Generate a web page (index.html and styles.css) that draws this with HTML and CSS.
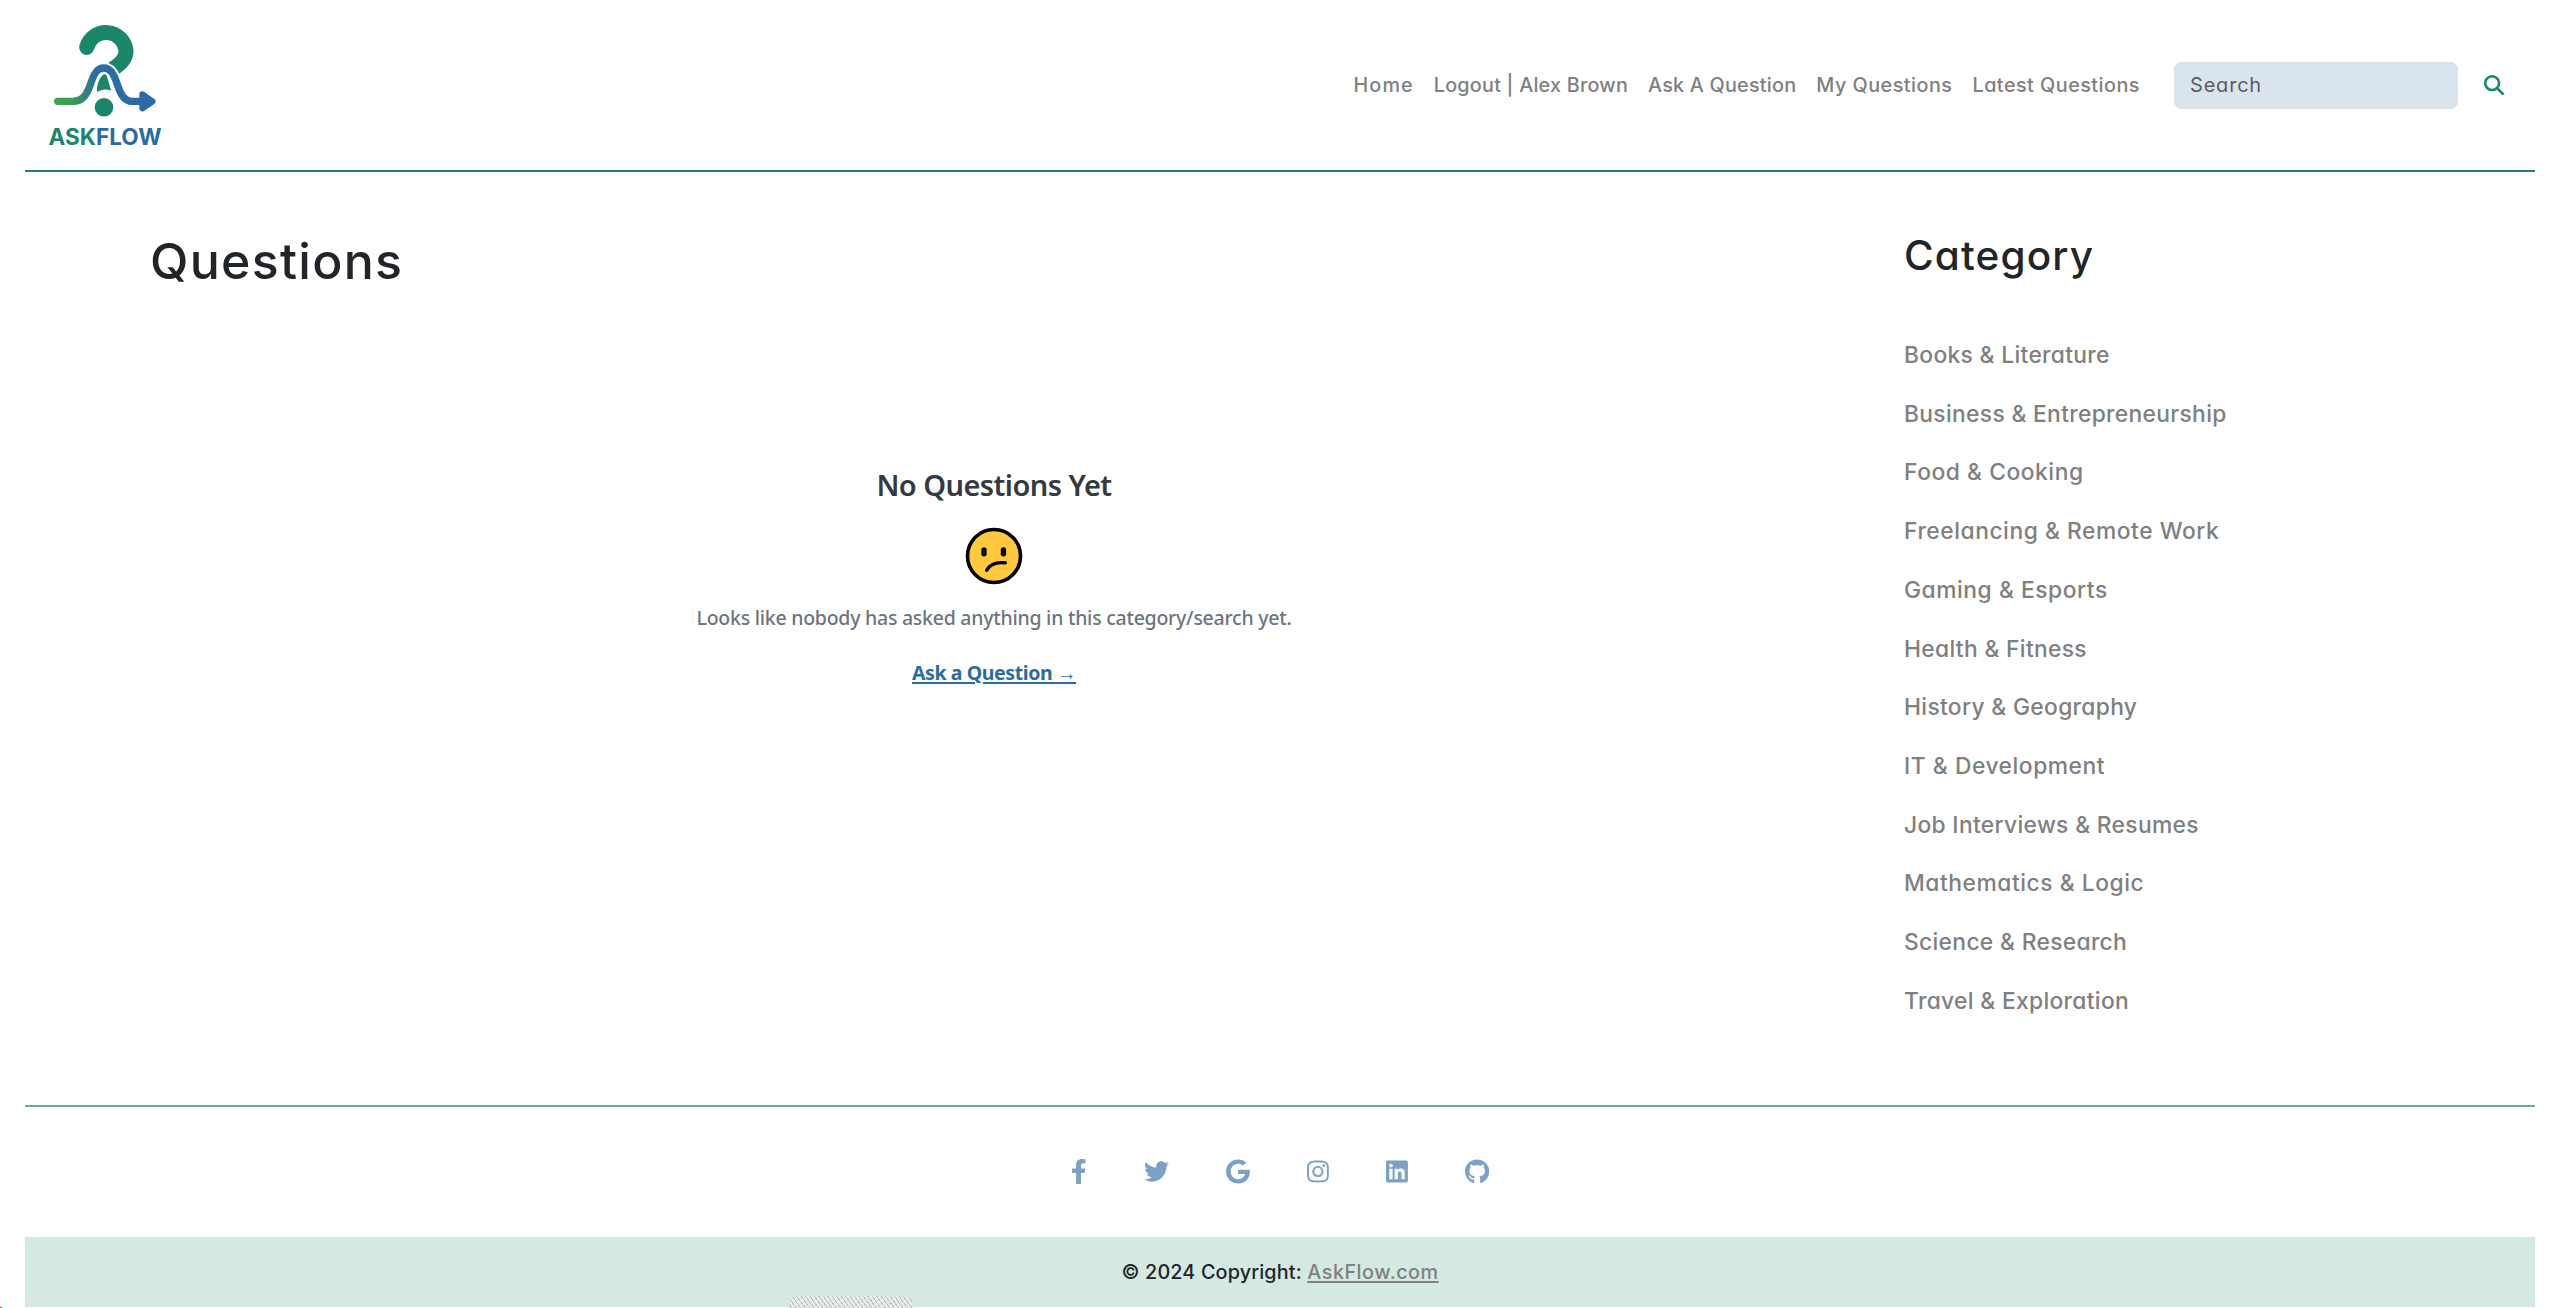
FILE: index.html
```html
<!DOCTYPE html>
<html lang="en">
<head>
<meta charset="utf-8">
<title>AskFlow</title>
<link rel="stylesheet" href="styles.css">
</head>
<body>
<div class="page">
  <header class="header">
    <a class="logo" href="#" aria-label="AskFlow">
      <svg width="130" height="140" viewBox="40 15 130 140">
        <defs>
          <linearGradient id="flow" gradientUnits="userSpaceOnUse" x1="54" y1="0" x2="156" y2="0">
            <stop offset="0" stop-color="#3fa648"/><stop offset=".18" stop-color="#3a9c50"/><stop offset=".42" stop-color="#2b6ca3"/><stop offset="1" stop-color="#2a6ba3"/>
          </linearGradient>
        </defs>
        <g fill="none" stroke="#1b876a" stroke-width="15">
          <path d="M86.700 47.500A20 20 0 0 1 126 51C126 58.500 121 64 112.500 69"/>
          <path d="M86.700 47.500h.01" stroke-linecap="round"/>
        </g>
        <path d="M104 68C110 68.500 113.500 72 117.300 84C121 96 125 101.300 132 101.300" fill="none" stroke="#fff" stroke-width="11"/>
        <path d="M107 76.500L111.200 90.800Q104 87.500 97 92C96.800 84 99.500 77 104 74.300Q105.800 73.500 107 76.500Z" fill="#1b876a"/>
        <circle cx="104" cy="107.300" r="9.300" fill="#1b876a"/>
        <path d="M57.600 101.300H73C82 101.300 86.500 96 90.500 84C94.500 72 98 68 103.700 68C109.400 68 113.200 72 117.200 84C121 96 125 101.300 132 101.300H148" fill="none" stroke="url(#flow)" stroke-width="7.300" stroke-linecap="round"/>
        <path d="M142.300 94.200L152.600 101.400L142.300 108.400Z" fill="#2a6ba3" stroke="#2a6ba3" stroke-width="6" stroke-linejoin="round"/>
        <text class="logo-text" x="48.500" y="145" textLength="113"><tspan fill="#1b876a">ASK</tspan><tspan fill="#2a6ba3">FLOW</tspan></text>
      </svg>
    </a>
    <nav class="nav">
      <a href="#">Home</a>
      <a href="#">Logout | Alex Brown</a>
      <a href="#">Ask A Question</a>
      <a href="#">My Questions</a>
      <a href="#">Latest Questions</a>
    </nav>
    <form class="search">
      <input type="text" placeholder="Search" aria-label="Search">
      <button type="button" aria-label="Search"><svg width="20" height="20" viewBox="0 0 512 512"><path d="M416 208c0 45.900-14.900 88.300-40 122.700L502.600 457.400c12.500 12.500 12.500 32.800 0 45.300s-32.800 12.500-45.300 0L330.700 376c-34.400 25.200-76.800 40-122.700 40C93.100 416 0 322.900 0 208S93.100 0 208 0S416 93.100 416 208zM208 352a144 144 0 1 0 0-288 144 144 0 1 0 0 288z"/></svg></button>
    </form>
  </header>

  <main class="main">
    <section class="questions">
      <h1>Questions</h1>
      <div class="empty">
        <h2>No Questions Yet</h2>
        <svg class="face" width="58" height="58" viewBox="0 0 58 58">
          <circle cx="29" cy="29" r="26.500" fill="#ffc83d" stroke="#000" stroke-width="3.600"/>
          <rect x="16.300" y="20.300" width="5.400" height="9.200" rx="2.700"/>
          <rect x="35.700" y="20.300" width="5.400" height="9.200" rx="2.700"/>
          <path d="M21.700 43.300Q26.300 34.300 40.300 35.800" fill="none" stroke="#000" stroke-width="3.400" stroke-linecap="round"/>
        </svg>
        <p>Looks like nobody has asked anything in this category/search yet.</p>
        <a href="#">Ask a Question <span class="arrow">→</span></a>
      </div>
    </section>
    <aside class="categories">
      <h2>Category</h2>
      <ul>
        <li><a href="#">Books &amp; Literature</a></li>
        <li><a href="#">Business &amp; Entrepreneurship</a></li>
        <li class="wide"><a href="#">Food &amp; Cooking</a></li>
        <li class="wide"><a href="#">Freelancing &amp; Remote Work</a></li>
        <li class="wide"><a href="#">Gaming &amp; Esports</a></li>
        <li><a href="#">Health &amp; Fitness</a></li>
        <li><a href="#">History &amp; Geography</a></li>
        <li class="wide"><a href="#">IT &amp; Development</a></li>
        <li><a href="#">Job Interviews &amp; Resumes</a></li>
        <li class="wide"><a href="#">Mathematics &amp; Logic</a></li>
        <li><a href="#">Science &amp; Research</a></li>
        <li><a href="#">Travel &amp; Exploration</a></li>
      </ul>
    </aside>
  </main>

  <footer class="footer">
    <div class="social">
      <a href="#" aria-label="Facebook"><svg viewBox="0 0 320 512"><path d="M279.140 288l14.220-92.660h-88.910v-60.130c0-25.350 12.420-50.060 52.240-50.060h40.420V6.260S260.430 0 225.360 0c-73.220 0-121.080 44.380-121.080 124.720v70.620H22.890V288h81.390v224h100.170V288z"/></svg></a>
      <a href="#" aria-label="Twitter"><svg viewBox="0 0 512 512"><path d="M459.370 151.716c.325 4.548.325 9.097.325 13.645 0 138.720-105.583 298.558-298.558 298.558-59.452 0-114.680-17.219-161.137-47.106 8.447.974 16.568 1.299 25.340 1.299 49.055 0 94.213-16.568 130.274-44.832-46.132-.975-84.792-31.188-98.112-72.772 6.498.974 12.995 1.624 19.818 1.624 9.421 0 18.843-1.300 27.614-3.573-48.081-9.747-84.143-51.980-84.143-102.985v-1.299c13.969 7.797 30.214 12.670 47.431 13.319-28.264-18.843-46.781-51.005-46.781-87.391 0-19.492 5.197-37.360 14.294-52.954 51.655 63.675 129.300 105.258 216.365 109.807-1.624-7.797-2.599-15.918-2.599-24.040 0-57.828 46.782-104.934 104.934-104.934 30.213 0 57.502 12.670 76.670 33.137 23.715-4.548 46.456-13.320 66.599-25.340-7.798 24.366-24.366 44.833-46.132 57.827 21.117-2.273 41.584-8.122 60.426-16.243-14.292 20.791-32.161 39.308-52.628 54.253z"/></svg></a>
      <a href="#" aria-label="Google"><svg viewBox="0 0 488 512"><path d="M488 261.800C488 403.300 391.100 504 248 504 110.800 504 0 393.200 0 256S110.800 8 248 8c66.800 0 123 24.500 166.300 64.900l-67.500 64.900C258.500 52.600 94.300 116.600 94.300 256c0 86.500 69.100 156.600 153.700 156.600 98.200 0 135-70.400 140.800-106.900H248v-85.300h236.100c2.300 12.700 3.900 24.900 3.900 41.400z"/></svg></a>
      <a href="#" aria-label="Instagram"><svg viewBox="0 0 448 512"><path d="M224.100 141c-63.600 0-114.900 51.300-114.900 114.900s51.300 114.900 114.900 114.900S339 319.500 339 255.900 287.700 141 224.100 141zm0 189.600c-41.100 0-74.700-33.500-74.700-74.700s33.500-74.700 74.700-74.700 74.700 33.500 74.700 74.700-33.600 74.700-74.700 74.700zm146.400-194.300c0 14.900-12 26.800-26.800 26.800-14.900 0-26.800-12-26.800-26.800s12-26.800 26.800-26.800 26.800 12 26.800 26.800zm76.100 27.200c-1.700-35.900-9.900-67.700-36.200-93.900-26.200-26.200-58-34.400-93.900-36.200-37-2.100-147.900-2.100-184.900 0-35.800 1.700-67.600 9.900-93.900 36.100s-34.400 58-36.200 93.900c-2.100 37-2.100 147.900 0 184.900 1.700 35.900 9.900 67.700 36.200 93.900s58 34.400 93.900 36.200c37 2.100 147.900 2.100 184.900 0 35.900-1.700 67.700-9.900 93.900-36.200 26.200-26.200 34.400-58 36.200-93.900 2.100-37 2.100-147.800 0-184.800zM398.800 388c-7.800 19.600-22.900 34.700-42.600 42.600-29.500 11.700-99.500 9-132.100 9s-102.700 2.600-132.100-9c-19.600-7.800-34.700-22.900-42.600-42.600-11.700-29.500-9-99.500-9-132.100s-2.600-102.700 9-132.100c7.800-19.600 22.900-34.700 42.600-42.600 29.500-11.700 99.500-9 132.100-9s102.700-2.600 132.100 9c19.600 7.800 34.700 22.900 42.600 42.600 11.700 29.500 9 99.500 9 132.100s2.700 102.700-9 132.100z"/></svg></a>
      <a href="#" aria-label="LinkedIn"><svg viewBox="0 0 448 512"><path d="M416 32H31.900C14.300 32 0 46.500 0 64.300v383.400C0 465.500 14.300 480 31.900 480H416c17.600 0 32-14.500 32-32.300V64.300c0-17.800-14.400-32.300-32-32.300zM135.400 416H69V202.200h66.500V416zm-33.200-243c-21.300 0-38.500-17.300-38.500-38.500S80.900 96 102.200 96c21.200 0 38.500 17.300 38.500 38.500 0 21.300-17.200 38.500-38.500 38.500zm282.100 243h-66.400V312c0-24.800-.5-56.700-34.500-56.700-34.600 0-39.900 27-39.900 54.900V416h-66.400V202.200h63.700v29.200h.9c8.900-16.800 30.600-34.500 62.900-34.500 67.200 0 79.700 44.300 79.700 101.900V416z"/></svg></a>
      <a href="#" aria-label="GitHub"><svg viewBox="0 0 496 512"><path d="M165.900 397.400c0 2-2.300 3.600-5.200 3.600-3.300.3-5.600-1.300-5.600-3.600 0-2 2.300-3.600 5.200-3.600 3-.3 5.600 1.300 5.600 3.600zm-31.100-4.500c-.7 2 1.300 4.300 4.300 4.900 2.600 1 5.600 0 6.200-2s-1.300-4.300-4.300-5.200c-2.600-.7-5.500.3-6.200 2.300zm44.200-1.700c-2.900.7-4.900 2.600-4.600 4.900.3 2 2.900 3.300 5.900 2.600 2.900-.7 4.900-2.600 4.600-4.600-.3-1.900-3-3.200-5.900-2.900zM244.800 8C106.100 8 0 113.300 0 252c0 110.900 69.800 205.800 169.500 239.200 12.800 2.300 17.300-5.600 17.300-12.100 0-6.200-.3-40.400-.3-61.400 0 0-70 15-84.700-29.800 0 0-11.400-29.100-27.800-36.600 0 0-22.900-15.700 1.600-15.400 0 0 24.900 2 38.600 25.800 21.900 38.600 58.600 27.500 72.900 20.900 2.300-16 8.800-27.100 16-33.700-55.900-6.200-112.300-14.300-112.300-110.500 0-27.500 7.600-41.300 23.600-58.900-2.600-6.500-11.100-33.300 2.600-67.900 20.900-6.500 69 27 69 27 20-5.600 41.500-8.500 62.800-8.500s42.800 2.900 62.800 8.500c0 0 48.100-33.600 69-27 13.700 34.700 5.200 61.400 2.600 67.900 16 17.700 25.800 31.500 25.800 58.900 0 96.500-58.900 104.200-114.800 110.500 9.200 7.900 17 22.900 17 46.400 0 33.700-.3 75.400-.3 83.600 0 6.500 4.600 14.400 17.300 12.100C428.200 457.800 496 362.900 496 252 496 113.300 383.500 8 244.800 8z"/></svg></a>
    </div>
    <div class="copyright"><span>© 2024 Copyright:</span> <a href="#">AskFlow.com</a></div>
  </footer>
</div>
<div class="hatch"></div>
<div class="mark"></div>
</body>
</html>
```
FILE: styles.css
```css
* { box-sizing: border-box; margin: 0; padding: 0; }

body {
  position: relative;
  height: 1308px;
  overflow: hidden;
  background: #fff;
  color: #212529;
  font-family: Inter, sans-serif;
  font-weight: 500;
  font-feature-settings: "cv11";
}

a { color: #808080; text-decoration: none; }

.page { padding: 0 25px; }

/* Header */
.header {
  display: flex;
  align-items: center;
  height: 172px;
  padding: 0 31px 0 15px;
  border-bottom: 2px solid #1b876a;
}
.logo { display: block; height: 140px; }
.logo svg { display: block; }
.logo-text { font: 700 22.5px Inter, sans-serif; }

.nav {
  display: flex;
  gap: 20px;
  margin-left: auto;
  margin-right: 34px;
  font-size: 19.8px;
  letter-spacing: .22px;
  white-space: nowrap;
}
.nav a:first-child { letter-spacing: 1.1px; }
.nav a:nth-child(n+4) { letter-spacing: .48px; }

.search { display: flex; align-items: center; gap: 26px; }
.search input {
  width: 284px;
  height: 47px;
  padding: 0 15px;
  border: 1px solid #dee2e6;
  border-radius: 7px;
  background: #d9e4ed;
  font: 400 20px Inter, sans-serif;
  font-feature-settings: "cv11";
  letter-spacing: .8px;
}
.search input::placeholder { color: #595c5f; opacity: 1; }
.search button { display: block; height: 20px; border: 0; background: none; }
.search svg { display: block; fill: #1b876a; }

/* Content */
.main {
  display: grid;
  grid-template-columns: 1688px 1fr;
  column-gap: 66px;
  height: 933px;
  padding: 59px 0 0 125px;
}
.questions h1 {
  font-size: 50px;
  font-weight: 500;
  line-height: 60px;
  letter-spacing: 1.3px;
}

.empty {
  display: flex;
  flex-direction: column;
  align-items: center;
  padding-top: 174px;
  font-family: "Noto Sans", sans-serif;
  font-size: 19.5px;
  line-height: 30px;
}
.empty h2 {
  color: #343a40;
  font-size: 29px;
  font-weight: 600;
  line-height: 40px;
  letter-spacing: -.55px;
}
.face { margin: 22px 0 18px; }
.empty p { color: #6c757d; letter-spacing: -.25px; }
.empty a {
  margin-top: 25px;
  color: #2a6ba3;
  font-weight: 700;
  letter-spacing: -.4px;
  text-decoration: underline;
  text-decoration-thickness: 2px;
  text-underline-offset: 2px;
}
.arrow { font-weight: 400; }

.categories h2 {
  font-size: 40.5px;
  font-weight: 500;
  line-height: 50px;
  letter-spacing: 1.15px;
}
.categories ul { margin-top: 45px; list-style: none; }
.categories li {
  height: 58.73px;
  font-size: 22.8px;
  line-height: 58.73px;
  letter-spacing: .33px;
}
.categories .wide { letter-spacing: .55px; }

/* Footer */
.footer { border-top: 2px solid #6aae98; }
.social {
  display: flex;
  justify-content: center;
  align-items: center;
  gap: 57.1px;
  height: 130px;
  padding-bottom: 2px;
}
.social svg { display: block; height: 25px; fill: #7ba2c5; }
.copyright {
  height: 70px;
  background: #d4e9e1;
  font-size: 19.8px;
  line-height: 70px;
  letter-spacing: .15px;
  text-align: center;
}
.copyright a {
  letter-spacing: .5px;
  text-decoration: underline;
  text-decoration-thickness: 2px;
  text-underline-offset: 2px;
}

/* Striped tab peeking over the bottom edge */
.hatch {
  position: absolute;
  left: 788px;
  bottom: 0;
  width: 125px;
  height: 12px;
  border-radius: 9px 9px 0 0;
  background: repeating-linear-gradient(54deg, #e6ece9 0 2.600px, #bcc2bf 2.600px 3.600px);
}
.mark {
  position: absolute;
  left: 0;
  bottom: 0;
  width: 2px;
  height: 1px;
  background: #d9261c;
}
```
